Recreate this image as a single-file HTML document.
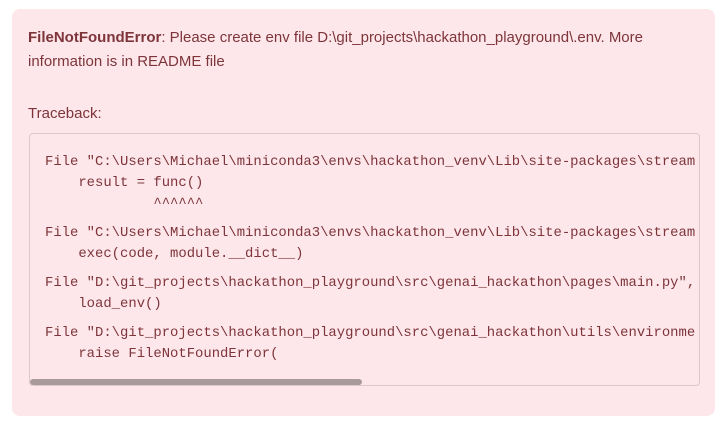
<!DOCTYPE html>
<html><head><style>
body{margin:0;width:727px;height:423px;background:#fff;overflow:hidden;font-family:"Liberation Sans",sans-serif}
.box{position:absolute;left:12px;top:9px;width:703px;height:407px;background:#fde7ea;border-radius:8px;color:#7d353b}
.t{position:absolute;left:16px;font-size:15px;line-height:24px;white-space:nowrap;letter-spacing:0px}
.code{position:absolute;left:17px;top:124px;width:669px;height:251px;border:1px solid #dcc7ca;border-radius:4px;overflow:hidden}
.l{position:absolute;font-family:"Liberation Mono",monospace;font-size:13.9px;white-space:pre;color:#7d353b;line-height:20px}
.sb{position:absolute;left:0;top:245px;width:332px;height:6px;background:#a99a9e;border-radius:3px}
</style></head><body>
<div class="box">
<div class="t" style="top:17px"><b>FileNotFoundError</b>: Please create env file D:\git_projects\hackathon_playground\.env. More</div>
<div class="t" style="top:41px">information is in README file</div>
<div class="t" style="top:93px">Traceback:</div>
<div class="code">
<div class="l" style="left:15px;top:18px">File "C:\Users\Michael\miniconda3\envs\hackathon_venv\Lib\site-packages\stream</div>
<div class="l" style="left:15px;top:39px">    result = func()</div>
<div class="l" style="left:15px;top:60px">             ^^^^^^</div>
<div class="l" style="left:15px;top:89px">File "C:\Users\Michael\miniconda3\envs\hackathon_venv\Lib\site-packages\stream</div>
<div class="l" style="left:15px;top:110px">    exec(code, module.__dict__)</div>
<div class="l" style="left:15px;top:139px">File "D:\git_projects\hackathon_playground\src\genai_hackathon\pages\main.py",</div>
<div class="l" style="left:15px;top:160px">    load_env()</div>
<div class="l" style="left:15px;top:189px">File "D:\git_projects\hackathon_playground\src\genai_hackathon\utils\environme</div>
<div class="l" style="left:15px;top:210px">    raise FileNotFoundError(</div>
<div class="sb"></div>
</div>
</div>
</body></html>
